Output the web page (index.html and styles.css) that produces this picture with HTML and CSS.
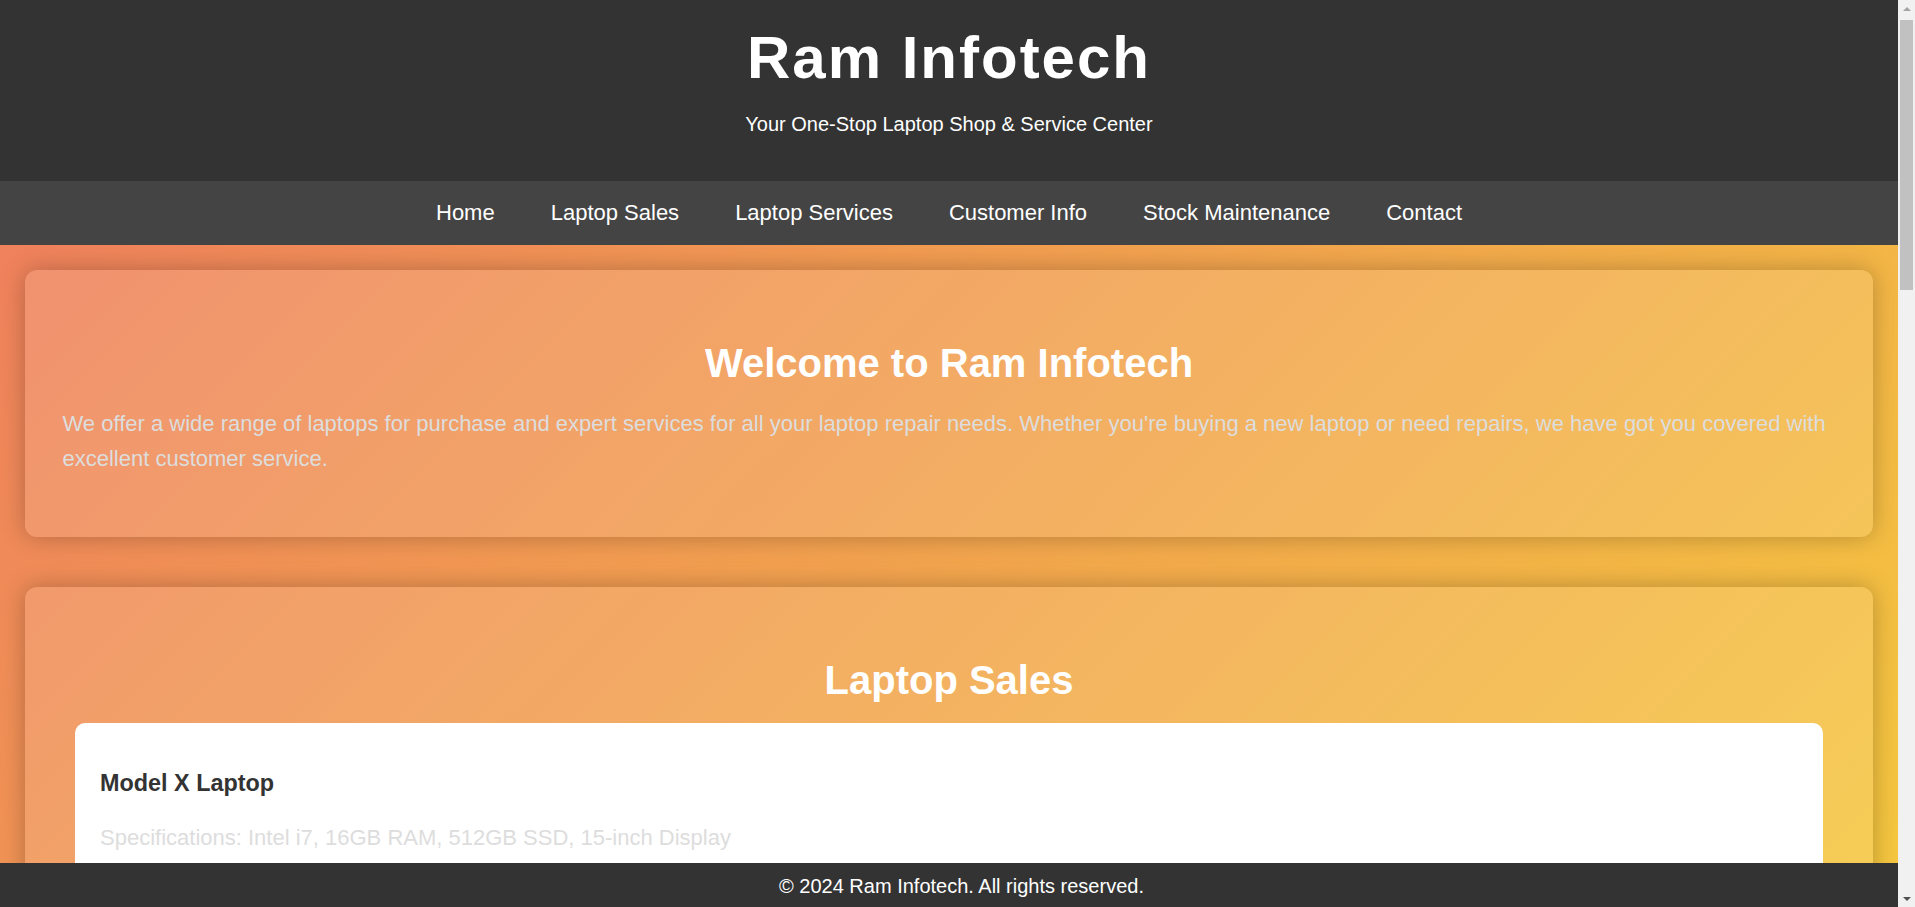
FILE: index.html
```html
<!DOCTYPE html>
<html lang="en">
<head>
<meta charset="utf-8">
<title>Ram Infotech</title>
<link rel="stylesheet" href="styles.css">
</head>
<body>
<header class="site-header">
  <h1 class="site-title">Ram Infotech</h1>
  <p class="site-tagline">Your One-Stop Laptop Shop &amp; Service Center</p>
</header>
<nav class="site-nav">
  <ul class="nav-list">
    <li><a class="nav-link" href="#home">Home</a></li>
    <li><a class="nav-link" href="#sales">Laptop Sales</a></li>
    <li><a class="nav-link" href="#services">Laptop Services</a></li>
    <li><a class="nav-link" href="#customers">Customer Info</a></li>
    <li><a class="nav-link" href="#stock">Stock Maintenance</a></li>
    <li><a class="nav-link" href="#contact">Contact</a></li>
  </ul>
</nav>
<main class="content">
  <section class="card" id="home">
    <h2 class="card-title">Welcome to Ram Infotech</h2>
    <p class="card-text">We offer a wide range of laptops for purchase and expert services for all your laptop repair needs. Whether you're buying a new laptop or need repairs, we have got you covered with excellent customer service.</p>
  </section>
  <section class="card" id="sales">
    <h2 class="card-title">Laptop Sales</h2>
    <div class="item">
      <h3 class="item-title">Model X Laptop</h3>
      <p class="card-text">Specifications: Intel i7, 16GB RAM, 512GB SSD, 15-inch Display</p>
      <p class="card-text">Price: ₹85,000</p>
    </div>
    <div class="item">
      <h3 class="item-title">Model Y Laptop</h3>
      <p class="card-text">Specifications: AMD Ryzen 5, 8GB RAM, 256GB SSD, 14-inch Display</p>
      <p class="card-text">Price: ₹55,000</p>
    </div>
    <div class="item">
      <h3 class="item-title">Model Z Laptop</h3>
      <p class="card-text">Specifications: Intel i5, 8GB RAM, 1TB HDD, 15.6-inch Display</p>
      <p class="card-text">Price: ₹45,000</p>
    </div>
  </section>
  <section class="card" id="services">
    <h2 class="card-title">Laptop Services</h2>
    <p class="card-text">We provide the following services:</p>
    <ul class="card-list">
      <li>Screen Replacement</li>
      <li>Battery Replacement</li>
      <li>Keyboard Repair</li>
      <li>Software Installation &amp; Virus Removal</li>
    </ul>
  </section>
  <section class="card" id="customers">
    <h2 class="card-title">Customer Info</h2>
    <p class="card-text">Register with us to keep track of your purchases, warranties and service history.</p>
  </section>
  <section class="card" id="stock">
    <h2 class="card-title">Stock Maintenance</h2>
    <p class="card-text">Our inventory is updated daily so you always know which models are available in store.</p>
  </section>
  <section class="card" id="contact">
    <h2 class="card-title">Contact</h2>
    <p class="card-text">Address: Main Road, Near Bus Stand</p>
    <p class="card-text">Phone: +91 98765 43210</p>
    <p class="card-text">Email: info@raminfotech.com</p>
  </section>
</main>
<footer class="site-footer">
  <p class="footer-text">© 2024 Ram Infotech. All rights reserved.</p>
</footer>
<div class="scrollbar" aria-hidden="true">
  <div class="scroll-arrow scroll-arrow-up"></div>
  <div class="scroll-thumb"></div>
  <div class="scroll-spacer"></div>
  <div class="scroll-arrow scroll-arrow-down"></div>
</div>
</body>
</html>
```

FILE: styles.css
```css
html, body {
  margin: 0;
  padding: 0;
}

body {
  margin-right: 17px;
  font-family: "Liberation Sans", Arial, sans-serif;
  font-size: 20px;
  color: #ddd;
  background: linear-gradient(135deg, #ef7b5f 0%, #f5c83e 100%) fixed;
}

.site-header {
  background: #333;
  color: #fff;
  text-align: center;
  padding: 23px 0 45px;
}

.site-title {
  margin: 0;
  font-size: 60px;
  line-height: 69px;
  letter-spacing: 2px;
  font-weight: bold;
}

.site-tagline {
  margin: 20.5px 0 0;
  font-size: 20px;
  line-height: 23px;
}

.site-nav {
  background: #444;
  padding: 19.5px 0;
}

.nav-list {
  list-style: none;
  margin: 0;
  padding: 0;
  display: flex;
  justify-content: center;
  gap: 56px;
}

.nav-link {
  color: #fff;
  text-decoration: none;
  font-size: 22px;
  line-height: 25px;
  display: block;
}

.content {
  display: flex;
  flex-direction: column;
  gap: 50px;
  padding: 25px;
}

.card {
  background: rgba(255, 255, 255, 0.12);
  border-radius: 12px;
  padding: 38.5px 37.5px;
  box-shadow: 0 0 25px rgba(0, 0, 0, 0.25);
}

.card-title {
  font-size: 40px;
  line-height: 46px;
  color: #fff;
  text-align: center;
  margin: 32px 0 20px;
}

.card-text {
  font-size: 22px;
  line-height: 1.6;
  color: #ddd;
  margin: 0 0 22px;
}

.card-list {
  font-size: 22px;
  line-height: 1.6;
  color: #ddd;
  margin: 0 0 22px;
}

.item {
  background: #fff;
  border-radius: 10px;
  padding: 25px;
  margin: 0 12.5px 20px;
}

.item-title {
  font-size: 23.4px;
  color: #333;
  margin: 22px 0 23px;
}

.site-footer {
  position: fixed;
  left: 0;
  right: 17px;
  bottom: 0;
  box-sizing: border-box;
  background: #333;
  color: #fff;
  text-align: center;
  padding: 11px 0 9px 25px;
}

.footer-text {
  margin: 0;
  font-size: 20px;
  line-height: 24px;
}

.scrollbar {
  position: fixed;
  top: 0;
  right: 0;
  bottom: 0;
  width: 17px;
  background: #f1f1f1;
  display: flex;
  flex-direction: column;
  align-items: center;
}

.scroll-arrow {
  width: 17px;
  height: 17px;
  display: flex;
  align-items: center;
  justify-content: center;
}

.scroll-arrow::before {
  content: "";
  width: 0;
  height: 0;
  border-left: 4px solid transparent;
  border-right: 4px solid transparent;
}

.scroll-arrow-up::before {
  border-bottom: 4px solid #a3a3a3;
}

.scroll-arrow-down::before {
  border-top: 4px solid #505050;
}

.scroll-thumb {
  margin-top: 3px;
  width: 13px;
  height: 270px;
  background: #c1c1c1;
}

.scroll-spacer {
  flex: 1;
}
```
